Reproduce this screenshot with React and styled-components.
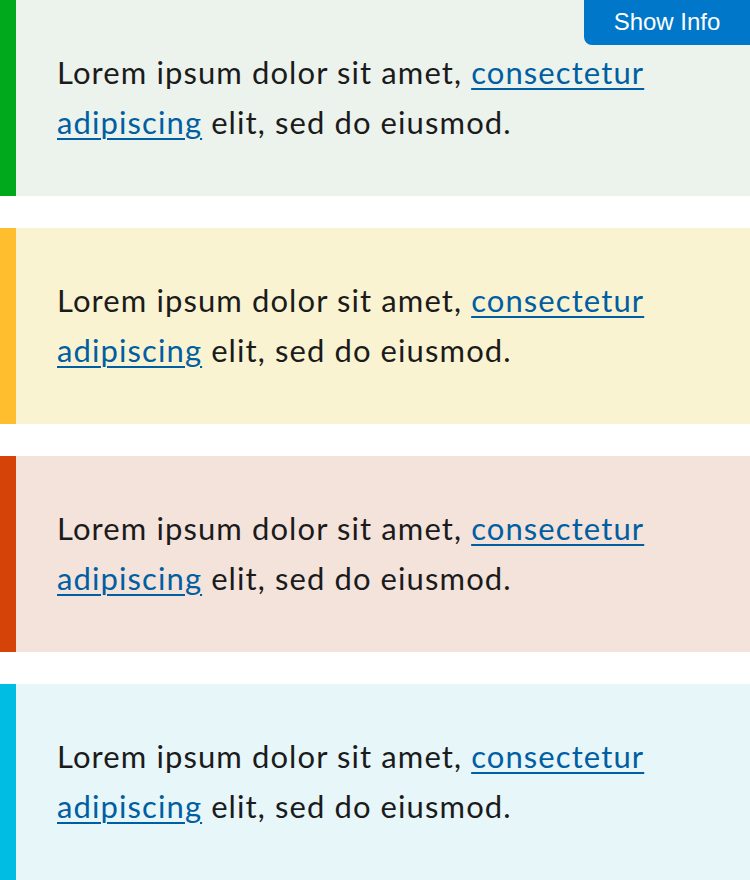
import React from 'react'
import styled, { createGlobalStyle } from 'styled-components'

const GlobalStyle = createGlobalStyle`
  body {
    margin: 0;
    background: #ffffff;
  }
`

const tones = {
  success: { bar: '#00a91c', bg: '#ecf3ec' },
  warning: { bar: '#ffbe2e', bg: '#faf3d1' },
  error: { bar: '#d54309', bg: '#f4e3db' },
  info: { bar: '#00bde3', bg: '#e7f6f8' },
}

const Page = styled.div`
  position: relative;
  display: flex;
  flex-direction: column;
  gap: 32px;
  width: 750px;
  height: 880px;
  overflow: hidden;
`

const Alert = styled.div`
  display: flex;
  align-items: center;
  height: 196px;
  box-sizing: border-box;
  border-left: 16px solid ${({ tone }) => tones[tone].bar};
  background: ${({ tone }) => tones[tone].bg};
  padding: 0 40px 3px 41px;
`

const Text = styled.p`
  margin: 0;
  font-family: Lato, 'Noto Sans', sans-serif;
  font-size: 31px;
  letter-spacing: 1.1px;
  line-height: 50px;
  color: #1b1b1b;
  max-width: 640px;
`

const Link = styled.a`
  color: #005ea2;
  text-decoration: underline;
  text-underline-offset: 4px;
  text-decoration-thickness: 2px;
`

const InfoButton = styled.button`
  position: absolute;
  top: 0;
  right: 0;
  width: 166px;
  height: 45px;
  padding: 0 0 2px;
  border: none;
  border-radius: 0 0 0 8px;
  background: #0077c8;
  color: #ffffff;
  font-family: 'Liberation Sans', Arial, sans-serif;
  font-size: 24px;
  cursor: pointer;
`

const Message = () => (
  <Text>
    Lorem ipsum dolor sit amet, <Link href="#">consectetur</Link>
    <br />
    <Link href="#">adipiscing</Link> elit, sed do eiusmod.
  </Text>
)

export default function App() {
  return (
    <>
      <GlobalStyle />
      <Page>
        {['success', 'warning', 'error', 'info'].map((tone) => (
          <Alert key={tone} tone={tone}>
            <Message />
          </Alert>
        ))}
        <InfoButton>Show Info</InfoButton>
      </Page>
    </>
  )
}
